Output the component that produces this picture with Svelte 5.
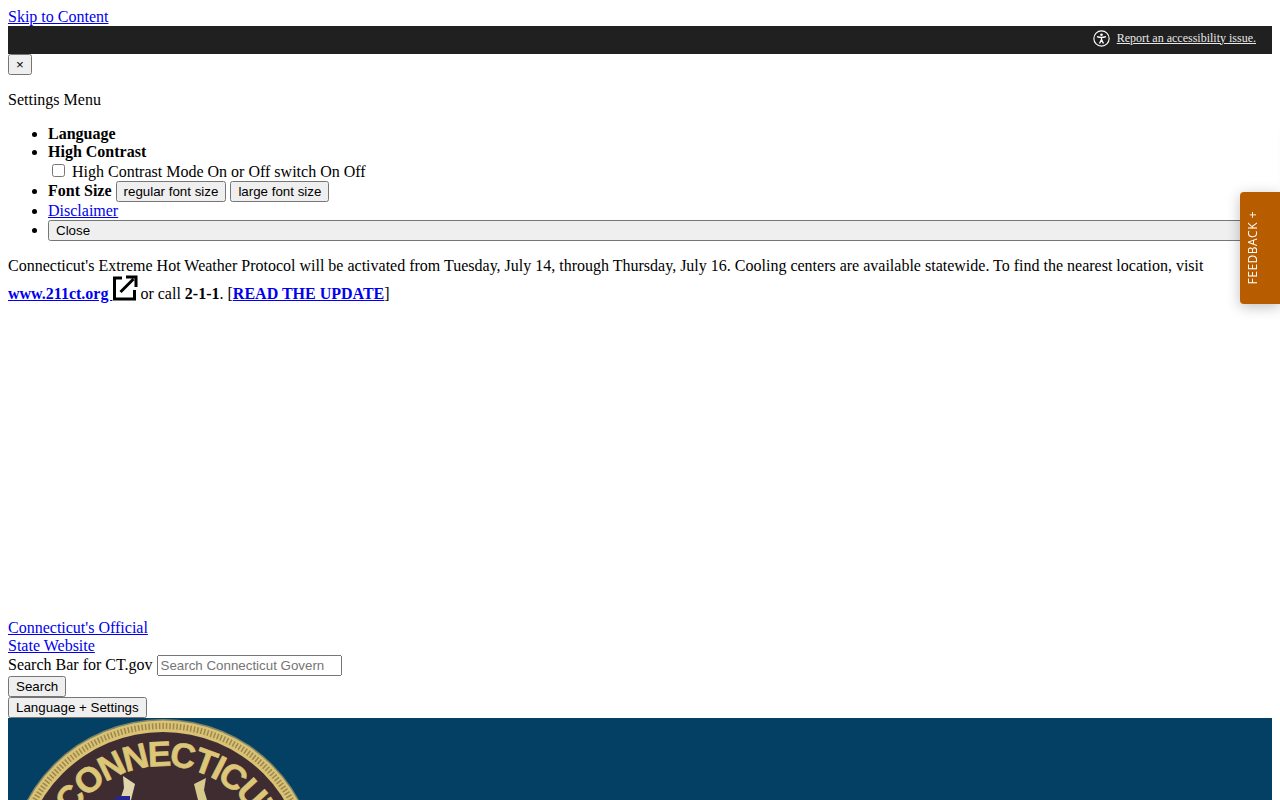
<script lang="ts">
	const alertText =
		"Connecticut's Extreme Hot Weather Protocol will be activated from Tuesday, July 14, through Thursday, July 16. Cooling centers are available statewide. To find the nearest location, visit";
</script>

<a href="#main">Skip to Content</a>
<div class="a11y-bar">
	<svg class="a11y-icon" viewBox="0 0 24 24" width="17" height="17" aria-hidden="true">
		<circle cx="12" cy="12" r="10.8" fill="none" stroke="#fff" stroke-width="1.6" />
		<circle cx="12" cy="6.6" r="1.8" fill="#fff" />
		<path d="M5.6 9.2 C9 10.4 15 10.4 18.4 9.2 M12 10 V14 M12 13.6 L9.2 19 M12 13.6 L14.8 19" fill="none" stroke="#fff" stroke-width="1.9" />
	</svg>
	<a href="#report">Report an accessibility issue.</a>
</div>
<button class="dismiss">×</button>

<p>Settings Menu</p>
<ul>
	<li><strong>Language</strong></li>
	<li>
		<strong>High Contrast</strong>
		<div class="switch">
			<input type="checkbox" id="contrast" />
			<label for="contrast">High Contrast Mode On or Off switch On Off</label>
		</div>
	</li>
	<li>
		<strong>Font Size</strong>
		<button>regular font size</button>
		<button>large font size</button>
	</li>
	<li><a href="#disclaimer">Disclaimer</a></li>
	<li><button class="close">Close</button></li>
</ul>

<p class="alert">
	{alertText}
	<a class="strong" href="#211">www.211ct.org <svg class="external" viewBox="0 0 24 26" width="24" height="26" aria-hidden="true">
			<path d="M10 3 H2.5 V24 H22.5 V15" fill="none" stroke="#000" stroke-width="3" />
			<path d="M8.5 17 L21.5 4 M14 2 H24 V12" fill="none" stroke="#000" stroke-width="3" />
		</svg></a>
	or call <strong>2-1-1</strong>. [<a class="strong" href="#update">READ THE UPDATE</a>]
</p>

<div class="embed-gap"></div>

<a href="#home">Connecticut's Official<br />State Website</a>
<div class="search">
	<label for="q">Search Bar for CT.gov</label>
	<input id="q" type="text" placeholder="Search Connecticut Govern" />
</div>
<div class="row"><button>Search</button></div>
<div class="row"><button>Language + Settings</button></div>

<section class="hero">
	<svg class="seal" viewBox="0 0 320 320" width="320" height="320" aria-hidden="true">
		<defs>
			<path id="seal-arc" d="M52 160 A108 108 0 0 1 268 160" transform="rotate(3 160 160)" />
		</defs>
		<circle cx="160" cy="160" r="155" fill="#7f8468" />
		<circle cx="160" cy="160" r="153.5" fill="#d9c274" />
		<circle cx="160" cy="160" r="148" fill="none" stroke="#9c8750" stroke-width="6" stroke-dasharray="1.5 2" />
		<circle cx="160" cy="160" r="142" fill="#3f2c30" />
		<text class="seal-text"><textPath href="#seal-arc" startOffset="50%" text-anchor="middle">CONNECTICUT</textPath></text>
		<path d="M120 62 L132 70 L128 86 L117 86 L121 74 Z" fill="#e0d6ae" />
		<path d="M203 64 L191 70 L195 86 L204 86 L201 76 Z" fill="#d8c98c" />
		<path d="M110 86 L116 82 L127 82 L127 90 L110 90 Z" fill="#27278f" />
	</svg>
</section>

<button class="feedback"><span>FEEDBACK +</span></button>
<div class="offscreen-shadow"></div>

<style>
	:global(body) {
		margin: 8px;
		font-family: 'Liberation Serif', 'Times New Roman', serif;
		font-size: 16px;
		color: #000;
		background: #fff;
	}

	a {
		color: #00e;
	}

	button {
		font-family: 'Liberation Sans', Arial, sans-serif;
		font-size: 13.333px;
	}

	.a11y-bar {
		display: flex;
		align-items: center;
		justify-content: flex-end;
		gap: 7px;
		box-sizing: border-box;
		height: 28px;
		padding: 0 16px 4px 0;
		background: #202020;
		font-size: 12px;
	}
	.a11y-bar a {
		color: #e8e8e8;
	}
	.a11y-icon {
		display: block;
	}

	.dismiss {
		display: block;
	}

	p {
		margin: 16px 0;
	}

	ul {
		margin: 16px 0;
		padding-left: 40px;
	}

	.switch {
		padding-left: 4px;
	}
	.switch input {
		margin: 3px 3px 3px 0;
	}

	.close {
		display: block;
		width: 100%;
		text-align: left;
		padding-left: 6px;
	}

	.alert {
		margin: 16px 0 0;
	}
	.strong {
		font-weight: bold;
		color: #00e;
	}
	.external {
		display: inline-block;
		vertical-align: -2px;
		overflow: visible;
	}

	.embed-gap {
		height: 316px;
	}

	.search input {
		width: 177px;
		box-sizing: content-box;
		font-family: 'Liberation Sans', Arial, sans-serif;
		font-size: 13.333px;
	}

	.hero {
		height: 400px;
		background: #044064;
		overflow: hidden;
	}
	.seal {
		display: block;
		margin: -4px 0 0 -5px;
	}
	.seal-text {
		font-family: 'Liberation Sans', Arial, sans-serif;
		font-size: 35px;
		font-weight: bold;
		letter-spacing: -2.5px;
		fill: #dcc678;
		stroke: #dcc678;
		stroke-width: 0.6px;
	}

	.feedback {
		position: fixed;
		top: 192px;
		right: 0;
		width: 40px;
		height: 112px;
		padding: 0;
		border: 0;
		border-radius: 4px 0 0 4px;
		background: #b85c00;
		color: #fff;
		font-family: 'Open Sans', sans-serif;
		font-size: 12px;
		box-shadow: 0 3px 14px rgba(0, 0, 0, 0.25);
		display: flex;
		align-items: center;
		justify-content: center;
	}
	.feedback span {
		writing-mode: vertical-rl;
		transform: rotate(180deg);
		letter-spacing: 0.5px;
		margin-right: 15px;
	}

	.offscreen-shadow {
		position: fixed;
		top: 130px;
		left: 1290px;
		width: 300px;
		height: 60px;
		box-shadow: 0 0 14px rgba(0, 0, 0, 0.12);
	}
</style>
